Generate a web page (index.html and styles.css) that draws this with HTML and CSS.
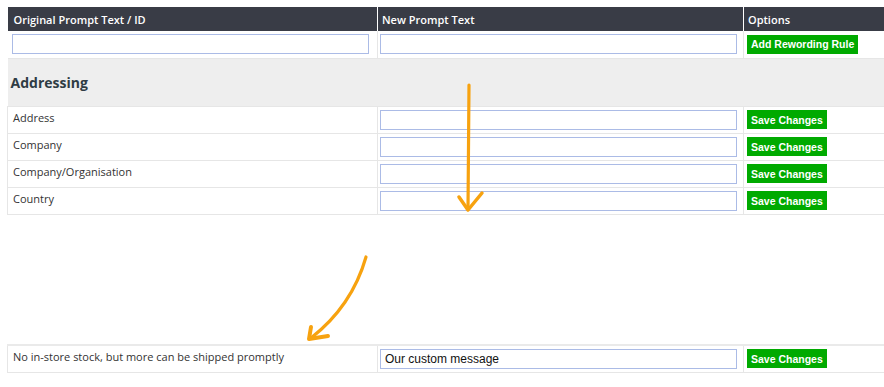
FILE: index.html
```html
<!DOCTYPE html>
<html lang="en">
<head>
    <meta charset="UTF-8">
    <title>Prompt Rewording</title>
    <link rel="stylesheet" href="styles.css">
</head>
<body>
    <div class="page">
        <table class="rules">
            <tr class="head">
                <th class="col-orig">Original Prompt Text / ID</th>
                <th class="col-new">New Prompt Text</th>
                <th class="col-opt">Options</th>
            </tr>
            <tr class="add-row">
                <td><input type="text" class="field"></td>
                <td class="mid"><input type="text" class="field"></td>
                <td class="opt"><button class="btn">Add Rewording Rule</button></td>
            </tr>
            <tr class="section">
                <td colspan="3">Addressing</td>
            </tr>
            <tr class="item">
                <td class="label">Address</td>
                <td class="mid"><input type="text" class="field"></td>
                <td class="opt"><button class="btn">Save Changes</button></td>
            </tr>
            <tr class="item">
                <td class="label">Company</td>
                <td class="mid"><input type="text" class="field"></td>
                <td class="opt"><button class="btn">Save Changes</button></td>
            </tr>
            <tr class="item">
                <td class="label">Company/Organisation</td>
                <td class="mid"><input type="text" class="field"></td>
                <td class="opt"><button class="btn">Save Changes</button></td>
            </tr>
            <tr class="item">
                <td class="label">Country</td>
                <td class="mid"><input type="text" class="field"></td>
                <td class="opt"><button class="btn">Save Changes</button></td>
            </tr>
        </table>

        <div class="gap"></div>

        <table class="rules lower">
            <tr class="item">
                <td class="label col-orig">No in-store stock, but more can be shipped promptly</td>
                <td class="mid col-new"><input type="text" class="field" value="Our custom message"></td>
                <td class="opt col-opt"><button class="btn">Save Changes</button></td>
            </tr>
        </table>
    </div>

    <svg class="arrows" width="884" height="387" viewBox="0 0 884 387">
        <g fill="none" stroke="#f7a20f" stroke-linecap="round" stroke-linejoin="round">
            <path d="M469 85 L468 209" stroke-width="3.2"/>
            <path d="M459 197 L468 210 L482 193" stroke-width="3.5"/>
            <path d="M366 257 Q352 306 311 338" stroke-width="3.2"/>
            <path d="M311 327 L309 339 L328 336" stroke-width="4"/>
        </g>
    </svg>
</body>
</html>
```

FILE: styles.css
```css
body {
    margin: 0;
    padding: 0;
    background: #fff;
    font-family: "Open Sans", Arial, sans-serif;
    overflow: hidden;
}
.page {
    padding: 7px 0 0 7px;
}
.rules {
    border-collapse: collapse;
    width: 882px;
    table-layout: fixed;
}
.col-orig {
    width: 370px;
}
.col-new {
    width: 366px;
}
.rules th {
    background-color: #393c46;
    color: #fff;
    font-size: 11px;
    font-weight: 600;
    text-align: left;
    height: 24px;
    padding: 0 4px;
    border-left: 1px solid #fff;
    box-sizing: border-box;
}
.rules th:first-child {
    border-left: none;
    padding-left: 6px;
}
.rules td {
    padding: 0 4px;
    border: 1px solid #e6e6e6;
    font-size: 11px;
    color: #333;
    box-sizing: border-box;
}
.rules td.mid {
    padding-left: 2px;
}
.rules td.opt {
    padding-left: 3px;
}
.add-row td {
    height: 27px;
    border-top: none;
}
.add-row td:first-child {
    border-left: none;
}
.section td {
    background-color: #eeeeee;
    height: 48px;
    padding: 0 3px;
    font-size: 14px;
    font-weight: 700;
    color: #2f3c44;
    border: none;
}
.item td {
    height: 27px;
}
.item td.label {
    padding: 0 5px 4px 5px;
}
.field {
    box-sizing: border-box;
    width: 357px;
    height: 20px;
    margin: 0;
    border: 1px solid #abbbe6;
    padding: 1px 4px 0;
    font-family: Arial, "Liberation Sans", sans-serif;
    font-size: 12px;
    color: #111;
    display: block;
}
.btn {
    background-color: #00aa00;
    color: #fff;
    border: none;
    font-family: Arial, "Liberation Sans", sans-serif;
    font-weight: 700;
    font-size: 10.5px;
    height: 19px;
    padding: 0 4px;
    display: block;
    cursor: pointer;
}
.gap {
    height: 129px;
}
.lower .item td {
    height: 28px;
    border-top: 2px solid #eaeaea;
}
.arrows {
    position: absolute;
    top: 0;
    left: 0;
    pointer-events: none;
}
```
